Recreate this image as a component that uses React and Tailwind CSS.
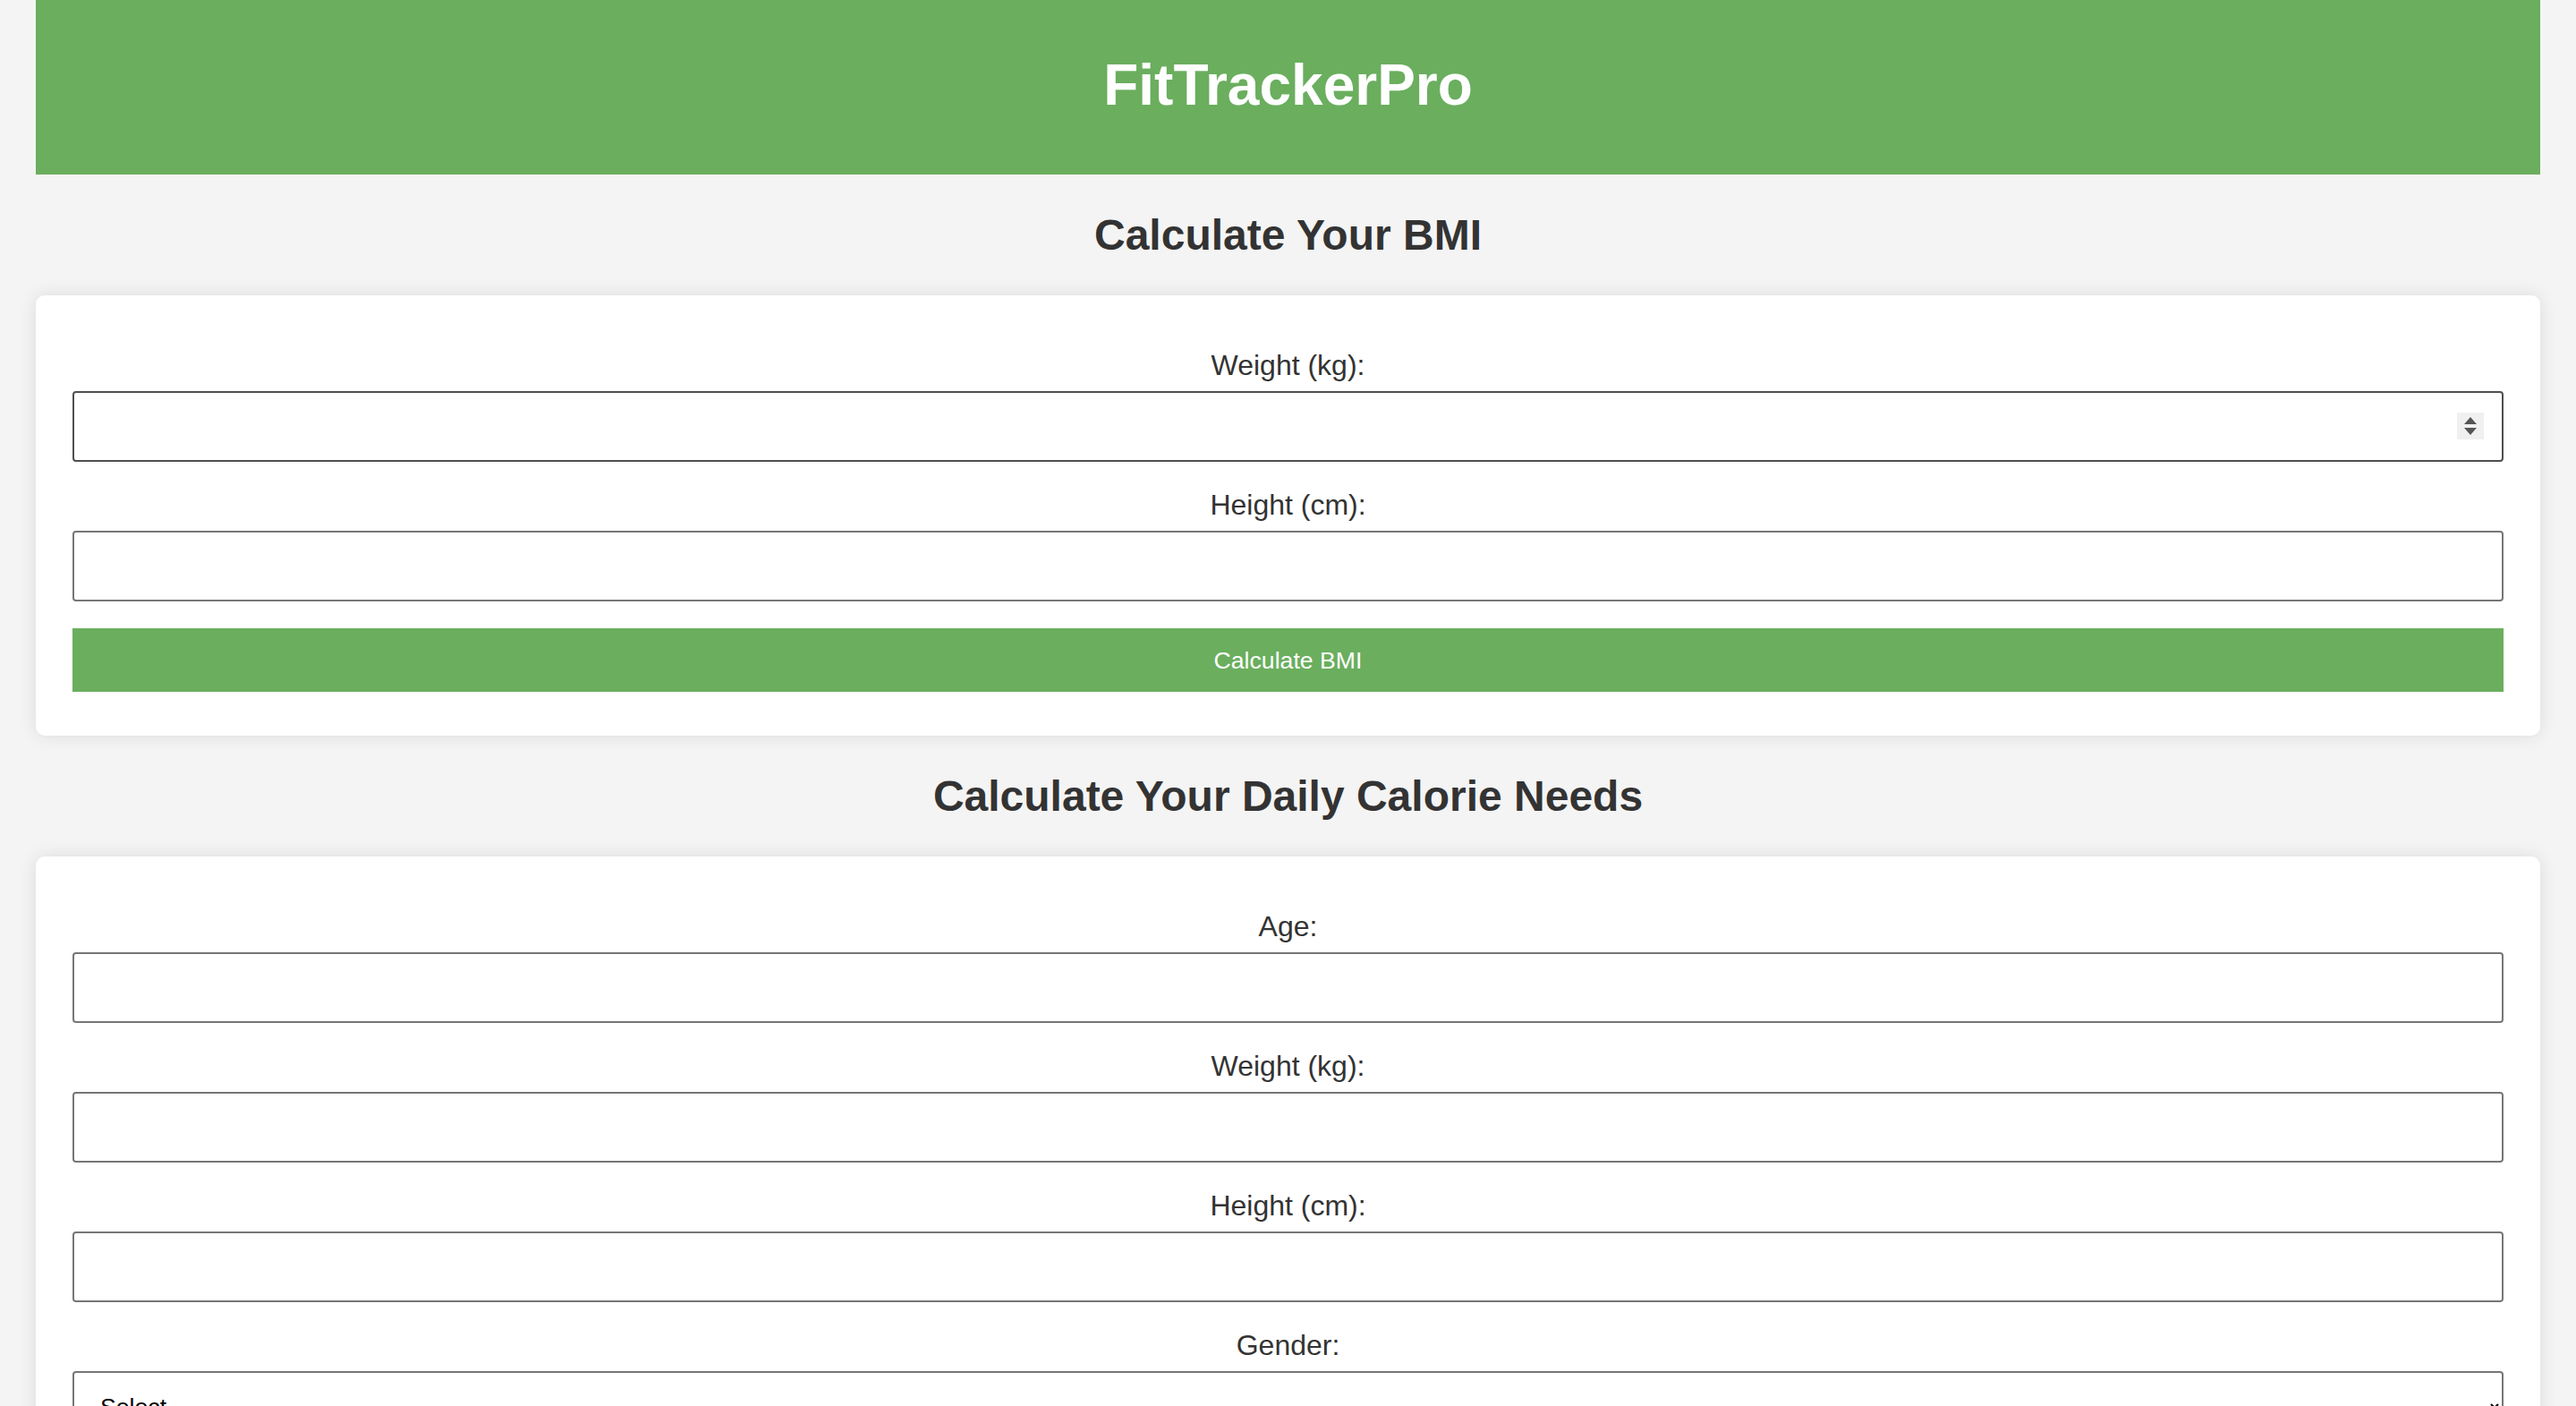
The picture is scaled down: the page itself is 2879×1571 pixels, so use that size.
import { useState } from 'react';

function Field({ label, value, onChange, spinner, dark }) {
  return (
    <div className="flex flex-col">
      <label className="mt-[20px] block text-center text-[32px] leading-[37px] text-[#333333]">{label}</label>
      <div className="relative mt-[10px] mb-[10px]">
        <input
          type="text"
          value={value}
          onChange={(e) => onChange(e.target.value)}
          className={`block h-[79px] w-full rounded-[4px] border-2 bg-white px-[20px] text-[26.67px] text-black outline-none ${dark ? 'border-[#4f4f4f]' : 'border-[#767676]'}`}
        />
        {spinner && (
          <div className="absolute right-[22px] top-[24px] flex h-[30px] w-[30px] flex-col items-center justify-center gap-[4px] bg-[#f0f0f0]">
            <svg width="14" height="8" viewBox="0 0 14 8"><path d="M7 0 L14 8 L0 8 Z" fill="#555555" /></svg>
            <svg width="14" height="8" viewBox="0 0 14 8"><path d="M0 0 L14 0 L7 8 Z" fill="#555555" /></svg>
          </div>
        )}
      </div>
    </div>
  );
}

export default function App() {
  const [bmi, setBmi] = useState({ weight: '', height: '' });
  const [cal, setCal] = useState({ age: '', weight: '', height: '', gender: '' });

  return (
    <div className="min-h-screen bg-[#f4f4f4] px-[40px] pb-[80px] font-['Liberation_Sans',Arial,sans-serif]">
      <header className="flex h-[195px] items-center justify-center bg-[#6aae5e] pb-[5px]">
        <h1 className="text-[64px] font-bold leading-[74px] text-white">FitTrackerPro</h1>
      </header>

      <h2 className="my-[40px] text-center text-[48px] font-bold leading-[55px] text-[#333333]">Calculate Your BMI</h2>

      <section className="rounded-[10px] bg-white px-[41px] pt-[40px] pb-[49px] shadow-[0_0_20px_rgba(0,0,0,0.1)]">
        <Field label="Weight (kg):" value={bmi.weight} onChange={(v) => setBmi({ ...bmi, weight: v })} spinner dark />
        <Field label="Height (cm):" value={bmi.height} onChange={(v) => setBmi({ ...bmi, height: v })} />
        <button className="mt-[20px] block h-[71px] w-full bg-[#6aae5e] text-[26.67px] text-white">Calculate BMI</button>
      </section>

      <h2 className="my-[40px] text-center text-[48px] font-bold leading-[55px] text-[#333333]">Calculate Your Daily Calorie Needs</h2>

      <section className="rounded-[10px] bg-white px-[41px] pt-[40px] pb-[49px] shadow-[0_0_20px_rgba(0,0,0,0.1)]">
        <Field label="Age:" value={cal.age} onChange={(v) => setCal({ ...cal, age: v })} />
        <Field label="Weight (kg):" value={cal.weight} onChange={(v) => setCal({ ...cal, weight: v })} />
        <Field label="Height (cm):" value={cal.height} onChange={(v) => setCal({ ...cal, height: v })} />
        <div className="flex flex-col">
          <label className="mt-[20px] block text-center text-[32px] leading-[37px] text-[#333333]">Gender:</label>
          <select
            value={cal.gender}
            onChange={(e) => setCal({ ...cal, gender: e.target.value })}
            className="mt-[10px] mb-[10px] block h-[79px] w-full rounded-[4px] border-2 border-[#767676] bg-white pl-[25px] pr-[20px] text-[26.67px] text-black"
          >
            <option value="">Select</option>
            <option value="male">Male</option>
            <option value="female">Female</option>
          </select>
        </div>
      </section>
    </div>
  );
}
